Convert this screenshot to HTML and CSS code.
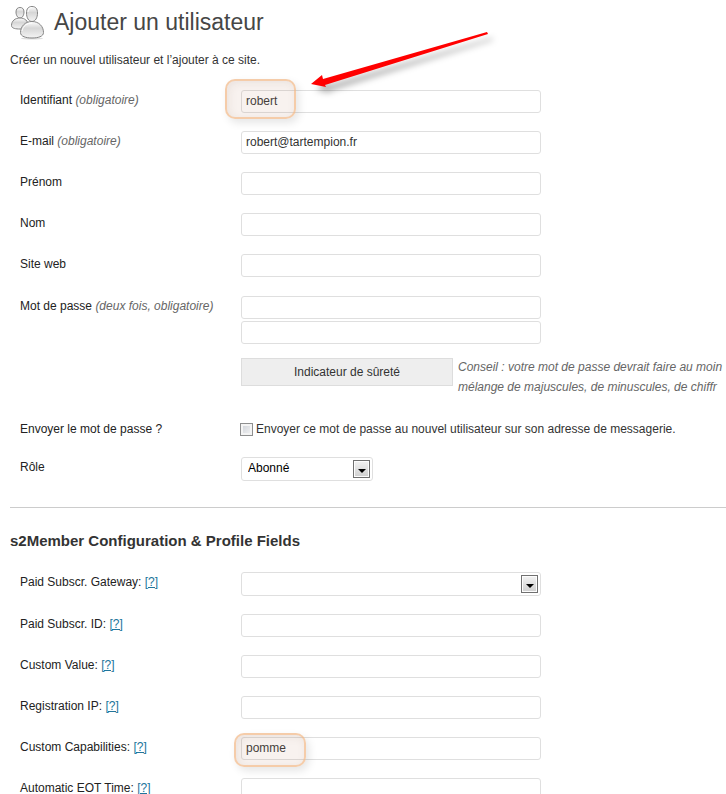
FILE: index.html
```html
<!DOCTYPE html>
<html lang="fr">
<head>
    <meta charset="UTF-8">
    <meta name="viewport" content="width=device-width, initial-scale=1.0">
    <title>Ajouter un utilisateur</title>
    <link rel="stylesheet" href="styles.css">
</head>
<body>
    <div class="wrap">
        <div class="page-title">
            <svg class="icon-users" width="36" height="36" viewBox="0 0 36 36">
                <defs>
                    <linearGradient id="metal" x1="0" y1="0" x2="0" y2="1">
                        <stop offset="0" stop-color="#fff"/>
                        <stop offset="0.4" stop-color="#d6d6d6"/>
                        <stop offset="1" stop-color="#f4f4f4"/>
                    </linearGradient>
                </defs>
                <ellipse cx="22" cy="34.500" rx="11" ry="1" fill="#ddd"/>
                <g fill="url(#metal)" stroke="#858585">
                    <path d="M6 8c0-3 1.500-4.500 4-4.500s4 1.500 4 4.500-1.500 6-4 6-4-3-4-6z"/>
                    <path d="M1.500 21.500c0-4.500 3.500-7.500 8.500-7.500s8 3 8 7-4 4-8 4-8.500-.5-8.500-3.500z"/>
                    <path d="M16.500 9c0-4.500 2-6.500 5.500-6.500s5.500 2 5.500 6.500-2 8.500-5.500 8.500-5.500-4-5.500-8.500z"/>
                    <path d="M10.500 28.500c0-6 4.500-11 11.500-11s11.500 5 11.500 11c0 4-5.500 5.500-11.500 5.500s-11.500-1.500-11.500-5.500z"/>
                </g>
                <path d="M12 27c1-5 5-8 10-8M18 8c0-3 2-4.500 4-4.500" fill="none" stroke="#fff"/>
            </svg>
            <h1>Ajouter un utilisateur</h1>
        </div>
        <p class="intro">Créer un nouvel utilisateur et l’ajouter à ce site.</p>

        <form>
            <div class="row">
                <label for="login">Identifiant <em>(obligatoire)</em></label>
                <div class="field">
                    <input type="text" class="text" id="login" value="robert">
                    <span class="mark mark-login"></span>
                    <svg class="arrow" width="200" height="80" viewBox="0 0 200 80">
                        <path d="M186 12L187 14L24 65L25 67L10 64L21 55L22 59Z" fill="#f00"/>
                    </svg>
                </div>
            </div>
            <div class="row">
                <label for="email">E-mail <em>(obligatoire)</em></label>
                <div class="field"><input type="text" class="text" id="email" value="robert@tartempion.fr"></div>
            </div>
            <div class="row">
                <label for="firstname">Prénom</label>
                <div class="field"><input type="text" class="text" id="firstname"></div>
            </div>
            <div class="row">
                <label for="lastname">Nom</label>
                <div class="field"><input type="text" class="text" id="lastname"></div>
            </div>
            <div class="row">
                <label for="url">Site web</label>
                <div class="field"><input type="text" class="text" id="url"></div>
            </div>
            <div class="row row-pass">
                <label for="pass1" id="pass-label">Mot de passe <em>(deux fois, obligatoire)</em></label>
                <div class="field">
                    <input type="password" class="text" id="pass1">
                    <input type="password" class="text" id="pass2" aria-labelledby="pass-label">
                    <div class="strength">
                        <div class="strength-box">Indicateur de sûreté</div>
                        <p class="hint">Conseil : votre mot de passe devrait faire au moin<br>mélange de majuscules, de minuscules, de chiffr</p>
                    </div>
                </div>
            </div>
            <div class="row">
                <label for="send">Envoyer le mot de passe ?</label>
                <div class="field">
                    <label class="check"><input type="checkbox" id="send">Envoyer ce mot de passe au nouvel utilisateur sur son adresse de messagerie.</label>
                </div>
            </div>
            <div class="row">
                <label for="role">Rôle</label>
                <div class="field">
                    <div class="select select-small">
                        <select id="role"><option>Abonné</option></select>
                        <span class="select-btn"></span>
                    </div>
                </div>
            </div>

            <hr>
            <h3>s2Member Configuration &amp; Profile Fields</h3>

            <div class="row">
                <div><label for="gateway">Paid Subscr. Gateway:</label> <a href="#">[?]</a></div>
                <div class="field">
                    <div class="select">
                        <select id="gateway"><option></option></select>
                        <span class="select-btn"></span>
                    </div>
                </div>
            </div>
            <div class="row">
                <div><label for="subscr">Paid Subscr. ID:</label> <a href="#">[?]</a></div>
                <div class="field"><input type="text" class="text" id="subscr"></div>
            </div>
            <div class="row">
                <div><label for="custom">Custom Value:</label> <a href="#">[?]</a></div>
                <div class="field"><input type="text" class="text" id="custom"></div>
            </div>
            <div class="row">
                <div><label for="ip">Registration IP:</label> <a href="#">[?]</a></div>
                <div class="field"><input type="text" class="text" id="ip"></div>
            </div>
            <div class="row">
                <div><label for="ccaps">Custom Capabilities:</label> <a href="#">[?]</a></div>
                <div class="field">
                    <input type="text" class="text" id="ccaps" value="pomme">
                    <span class="mark mark-caps"></span>
                </div>
            </div>
            <div class="row">
                <div><label for="eot">Automatic EOT Time:</label> <a href="#">[?]</a></div>
                <div class="field"><input type="text" class="text" id="eot"></div>
            </div>
        </form>
    </div>
</body>
</html>
```

FILE: styles.css
```css
* {
    box-sizing: border-box;
}

body {
    margin: 0;
    background: #fff;
    color: #333;
    font-family: "Liberation Sans", Arial, sans-serif;
    font-size: 12px;
    line-height: 20px;
    overflow-x: hidden;
}

.wrap {
    padding-left: 10px;
}

/* Title */
.page-title {
    display: flex;
    align-items: center;
    gap: 8px;
    height: 44px;
}

h1 {
    margin: 0;
    color: #464646;
    font-size: 23px;
    font-weight: normal;
}

.intro {
    margin: 6px 0 11px;
}

/* Form rows */
.row {
    display: grid;
    grid-template-columns: 221px 1fr;
    padding: 9px 0 9px 10px;
}

.row-pass {
    padding-top: 10px;
}

label {
    color: #222;
}

em {
    color: #666;
}

a {
    color: #21759b;
}

.field {
    position: relative;
    display: flex;
    flex-direction: column;
    align-items: flex-start;
    gap: 2px;
    min-width: 0;
}

.text,
select {
    width: 100%;
    max-width: 300px;
    height: 23px;
    margin: 0;
    padding: 0 4px 2px;
    border: 1px solid #dfdfdf;
    border-radius: 3px;
    background: #fff;
    color: #333;
    font-family: inherit;
    font-size: 12px;
}

/* Password strength */
.strength {
    display: flex;
    gap: 5px;
    margin-top: 12px;
    height: 43px;
}

.strength-box {
    flex: none;
    width: 212px;
    height: 28px;
    border: 1px solid #ddd;
    background: #eee;
    line-height: 26px;
    text-align: center;
}

.hint {
    margin: -1px 0 0;
    color: #666;
    font-style: italic;
    white-space: nowrap;
}

/* Checkbox */
.check {
    display: flex;
    align-items: center;
    gap: 3px;
    margin-left: -1px;
    color: #333;
}

.check input {
    appearance: none;
    width: 13px;
    height: 13px;
    margin: 0;
    border: 1px solid #8e8f8f;
    background: linear-gradient(135deg, #cbcfd5, #f6f6f6);
    box-shadow: inset 0 0 0 2px #f4f4f4;
}

/* Drop-downs */
.select {
    position: relative;
    width: 100%;
    max-width: 300px;
}

.select-small {
    max-width: 132px;
}

select {
    display: block;
    appearance: none;
    height: 24px;
    padding: 0 6px 2px;
    color: #000;
}

.select-btn {
    position: absolute;
    top: 3px;
    right: 3px;
    width: 17px;
    height: 18px;
    border: 1px solid #707070;
    background: linear-gradient(#f2f2f2, #cfcfcf);
    box-shadow: inset 0 0 0 1px #fcfcfc;
    pointer-events: none;
}

.select-btn::after {
    content: "";
    position: absolute;
    top: 8px;
    left: 4px;
    border: 4px solid transparent;
    border-top-color: #000;
    border-bottom: 0;
}

/* Section */
hr {
    margin: 17px 0 23px;
    border: 0;
    border-top: 1px solid #ccc;
}

h3 {
    margin: 0 0 12px;
    font-size: 15px;
}

/* Annotations */
.mark {
    position: absolute;
    border: 2px solid rgba(243, 178, 122, 0.6);
    border-radius: 10px;
    background: rgba(200, 150, 120, 0.12);
    box-shadow: 3px 4px 8px rgba(0, 0, 0, 0.1), inset 2px 2px 8px rgba(120, 90, 70, 0.1);
    pointer-events: none;
}

.mark-login {
    top: -11px;
    left: -16px;
    width: 71px;
    height: 40px;
}

.mark-caps {
    top: -4px;
    left: -7px;
    width: 72px;
    height: 34px;
}

.arrow {
    position: absolute;
    top: -70px;
    left: 60px;
    overflow: visible;
    filter: drop-shadow(5px 6px 3px rgba(0, 0, 0, 0.3));
    pointer-events: none;
}
```
